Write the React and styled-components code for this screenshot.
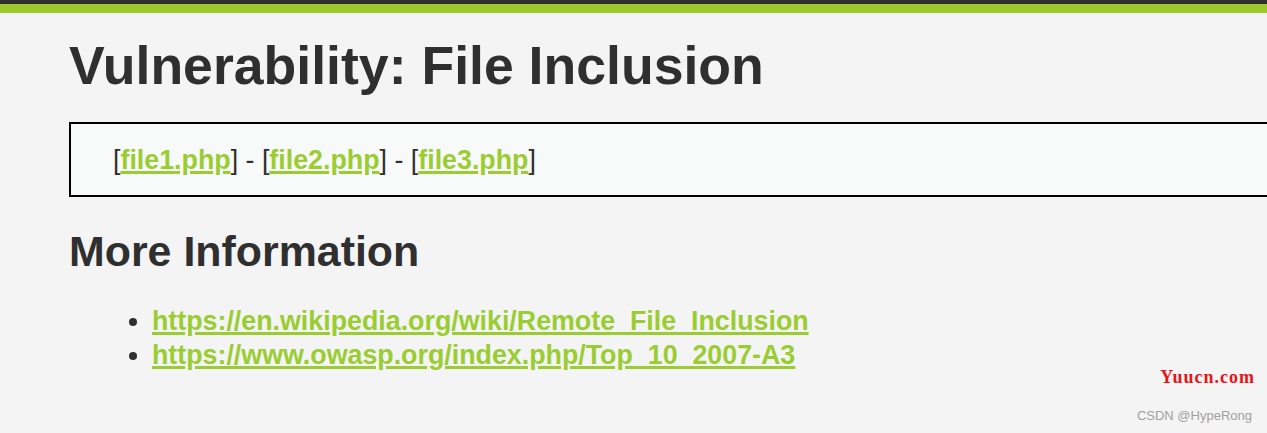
import React from "react";
import styled, { createGlobalStyle } from "styled-components";

const GlobalStyle = createGlobalStyle`
  html, body {
    margin: 0;
    padding: 0;
    background: #f4f4f4;
    overflow: hidden;
  }
  body {
    font-family: "Liberation Sans", Arial, sans-serif;
    color: #2f2f2f;
  }
`;

const Page = styled.div`
  position: relative;
  width: 1267px;
  height: 433px;
  overflow: hidden;
  background: #f4f4f4;
`;

const TopBar = styled.div`
  height: 4px;
  background: #2f2f2f;
  border-bottom: 9px solid #9dc92f;
`;

const Body = styled.div`
  padding: 0 0 0 69px;
  font-size: 26.8px;
`;

const Title = styled.h1`
  margin: 22px 0 25px;
  font-size: 53.6px;
  font-weight: 700;
  line-height: 1.149;
`;

const Box = styled.div`
  width: 1300px;
  border: 2px solid #000;
  background: #f8f9f9;
  padding: 21px 0 20px 42px;
  line-height: 1.149;
`;

const Link = styled.a`
  color: #9acd32;
  font-weight: 700;
  text-decoration: underline;
  text-decoration-thickness: 3px;
  text-underline-offset: 2px;
`;

const Subtitle = styled.h2`
  margin: 30px 0 27px;
  font-size: 42.9px;
  font-weight: 700;
  line-height: 1.149;
`;

const List = styled.ul`
  margin: 0;
  padding-left: 83px;
  line-height: 34px;
`;

const Mark = styled.div`
  position: absolute;
  right: ${(p) => p.$right}px;
  top: ${(p) => p.$top}px;
  font-family: ${(p) => (p.$serif ? '"Liberation Serif", serif' : '"Liberation Sans", sans-serif')};
  font-size: ${(p) => p.$size}px;
  font-weight: ${(p) => (p.$serif ? 700 : 400)};
  letter-spacing: ${(p) => (p.$serif ? "1px" : "0")};
  color: ${(p) => p.$color};
`;

const files = ["file1.php", "file2.php", "file3.php"];
const links = [
  "https://en.wikipedia.org/wiki/Remote_File_Inclusion",
  "https://www.owasp.org/index.php/Top_10_2007-A3",
];

export default function App() {
  return (
    <Page>
      <GlobalStyle />
      <TopBar />
      <Body>
        <Title>Vulnerability: File Inclusion</Title>
        <Box>
          {files.map((f, i) => (
            <React.Fragment key={f}>
              {i > 0 && " - "}[<Link href="#">{f}</Link>]
            </React.Fragment>
          ))}
        </Box>
        <Subtitle>More Information</Subtitle>
        <List>
          {links.map((l) => (
            <li key={l}>
              <Link href="#">{l}</Link>
            </li>
          ))}
        </List>
      </Body>
      <Mark $serif $right={12} $top={367} $size={18} $color="#e8141a">
        Yuucn.com
      </Mark>
      <Mark $right={15} $top={408} $size={13} $color="#a0a0a0">
        CSDN @HypeRong
      </Mark>
    </Page>
  );
}
